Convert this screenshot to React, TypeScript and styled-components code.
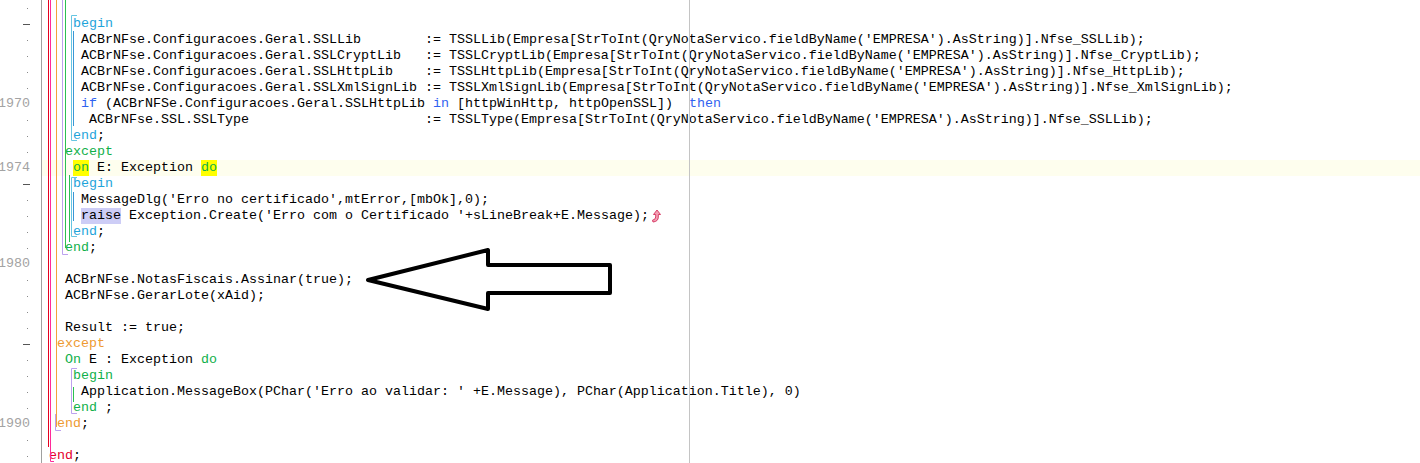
import React from 'react';
import styled, { createGlobalStyle } from 'styled-components';

const Global = createGlobalStyle`
  html, body { margin: 0; padding: 0; background: #ffffff; }
  body { width: 1420px; height: 463px; overflow: hidden; }
`;

type Kind = 'plain' | 'kw' | 'blk' | 'grn' | 'org' | 'red' | 'mark' | 'raise';
type Seg = [string, Kind?];
interface Line {
  n: number;
  segs: Seg[];
  fold?: boolean;
  current?: boolean;
  icon?: boolean;
}

const Q = "'EMPRESA'";
const tail = (fn: string) => `(Empresa[StrToInt(QryNotaServico.fieldByName(${Q}).AsString)].${fn});`;

const lines: Line[] = [
  { n: 1964, segs: [] },
  { n: 1965, segs: [['   '], ['begin', 'blk']], fold: true },
  { n: 1966, segs: [['    ACBrNFse.Configuracoes.Geral.SSLLib        := TSSLLib' + tail('Nfse_SSLLib')]] },
  { n: 1967, segs: [['    ACBrNFse.Configuracoes.Geral.SSLCryptLib   := TSSLCryptLib' + tail('Nfse_CryptLib')]] },
  { n: 1968, segs: [['    ACBrNFse.Configuracoes.Geral.SSLHttpLib    := TSSLHttpLib' + tail('Nfse_HttpLib')]] },
  { n: 1969, segs: [['    ACBrNFse.Configuracoes.Geral.SSLXmlSignLib := TSSLXmlSignLib' + tail('Nfse_XmlSignLib')]] },
  {
    n: 1970,
    segs: [
      ['    '],
      ['if', 'kw'],
      [' (ACBrNFSe.Configuracoes.Geral.SSLHttpLib '],
      ['in', 'kw'],
      [' [httpWinHttp, httpOpenSSL])  '],
      ['then', 'kw'],
    ],
  },
  { n: 1971, segs: [['     ACBrNFse.SSL.SSLType                      := TSSLType' + tail('Nfse_SSLLib')]] },
  { n: 1972, segs: [['   '], ['end', 'blk'], [';']] },
  { n: 1973, segs: [['  '], ['except', 'grn']] },
  { n: 1974, segs: [['   '], ['on', 'mark'], [' E: Exception '], ['do', 'mark']], current: true },
  { n: 1975, segs: [['   '], ['begin', 'blk']], fold: true },
  { n: 1976, segs: [["    MessageDlg('Erro no certificado',mtError,[mbOk],0);"]] },
  {
    n: 1977,
    segs: [['    '], ['raise', 'raise'], [" Exception.Create('Erro com o Certificado '+sLineBreak+E.Message);"]],
    icon: true,
  },
  { n: 1978, segs: [['   '], ['end', 'blk'], [';']] },
  { n: 1979, segs: [['  '], ['end', 'grn'], [';']] },
  { n: 1980, segs: [] },
  { n: 1981, segs: [['  ACBrNFse.NotasFiscais.Assinar(true);']] },
  { n: 1982, segs: [['  ACBrNFse.GerarLote(xAid);']] },
  { n: 1983, segs: [] },
  { n: 1984, segs: [['  Result := true;']] },
  { n: 1985, segs: [[' '], ['except', 'org']], fold: true },
  { n: 1986, segs: [['  '], ['On', 'grn'], [' E : Exception '], ['do', 'grn']] },
  { n: 1987, segs: [['   '], ['begin', 'grn']] },
  { n: 1988, segs: [["    Application.MessageBox(PChar('Erro ao validar: ' +E.Message), PChar(Application.Title), 0)"]] },
  { n: 1989, segs: [['   '], ['end', 'grn'], [' ;']] },
  { n: 1990, segs: [[' '], ['end', 'org'], [';']] },
  { n: 1991, segs: [] },
  { n: 1992, segs: [['end', 'red'], [';']] },
];

const kindColor: Record<Kind, string> = {
  plain: '#000000',
  kw: '#2f62f0',
  blk: '#1ea4da',
  grn: '#10b04a',
  org: '#ee9a30',
  red: '#e4002a',
  mark: '#10b04a',
  raise: '#000000',
};

const kindBg: Record<Kind, string> = {
  plain: 'transparent',
  kw: 'transparent',
  blk: 'transparent',
  grn: 'transparent',
  org: 'transparent',
  red: 'transparent',
  mark: '#ffff00',
  raise: '#cdcdf6',
};

const Page = styled.div`
  position: relative;
  width: 1420px;
  height: 463px;
  overflow: hidden;
  background: #ffffff;
`;

const Editor = styled.div`
  display: flex;
  flex-direction: column;
  margin-top: 0;
`;

const Row = styled.div`
  display: grid;
  grid-template-columns: 42px 1fr;
  height: 16px;
`;

const Gutter = styled.div`
  border-right: 1px solid #a0a0a0;
  display: flex;
  align-items: center;
  justify-content: flex-end;
  padding-right: 11px;
  font-family: 'Liberation Mono', 'Courier New', monospace;
  font-size: 13.33px;
  line-height: 16px;
  color: #a3a3a3;
`;

const Dot = styled.span`
  width: 1px;
  height: 1px;
  background: #8a8a8a;
  margin-right: 2px;
`;

const FoldMark = styled.span`
  width: 7px;
  height: 1px;
  background: #555555;
`;

const Code = styled.div<{ $current?: boolean }>`
  padding-left: 7px;
  white-space: pre;
  font-family: 'Liberation Mono', 'Courier New', monospace;
  font-size: 13.33px;
  line-height: 16px;
  color: #000000;
  background: ${(p) => (p.$current ? '#fefeee' : 'transparent')};
  display: flex;
  align-items: center;
`;

const Tok = styled.span<{ $kind: Kind }>`
  color: ${(p) => kindColor[p.$kind]};
  background: ${(p) => kindBg[p.$kind]};
`;

const Overlay = styled.svg`
  position: absolute;
  left: 0;
  top: 0;
  pointer-events: none;
`;

const JumpIcon = styled.svg`
  margin-left: 2px;
  flex: none;
`;

type Guide = { x: number; y1: number; y2: number; c: string; top?: number; bottom?: number };

const C = {
  red: '#e60020',
  mag: '#ff2a9a',
  org: '#f2a33a',
  lav: '#bda2ee',
  grn: '#2cc052',
  cyan: '#66c6e2',
  blue: '#3b98d6',
};

const guides: Guide[] = [
  { x: 48.5, y1: 0, y2: 447, c: C.red },
  { x: 50.5, y1: 0, y2: 461, c: C.mag, bottom: 54 },
  { x: 56.5, y1: 0, y2: 427, c: C.org },
  { x: 55.5, y1: 414, y2: 430, c: C.lav, bottom: 61 },
  { x: 62.5, y1: 0, y2: 254, c: C.lav, bottom: 68 },
  { x: 65.5, y1: 0, y2: 248, c: C.grn },
  { x: 69.5, y1: 175, y2: 242, c: C.grn },
  { x: 71.5, y1: 15, y2: 140, c: C.cyan, top: 77, bottom: 77 },
  { x: 73.5, y1: 31, y2: 126, c: C.blue },
  { x: 71.5, y1: 177, y2: 236, c: C.cyan, top: 77, bottom: 77 },
  { x: 73.5, y1: 192, y2: 221, c: C.blue },
  { x: 71.5, y1: 368, y2: 413, c: C.lav, top: 77, bottom: 77 },
  { x: 73.5, y1: 387, y2: 402, c: C.grn },
];

function Guides() {
  return (
    <Overlay width={1420} height={463} viewBox="0 0 1420 463">
      {guides.map((g, i) => {
        let d = '';
        if (g.top) d += `M${g.top} ${g.y1 + 0.5} H${g.x} `;
        else d += `M${g.x} ${g.y1} `;
        d += `V${g.y2 + (g.bottom ? 0.5 : 0)} `;
        if (g.bottom) d += `H${g.bottom}`;
        return <path key={i} d={d} fill="none" stroke={g.c} strokeWidth={1} />;
      })}
      <line x1={689.5} y1={0} x2={689.5} y2={463} stroke="#c4c4c4" strokeWidth={1} />
    </Overlay>
  );
}

function BigArrow() {
  return (
    <Overlay width={1420} height={463} viewBox="0 0 1420 463">
      <polygon
        points="368,280 488,250 488,265 610,265 610,293 488,293 488,309"
        fill="none"
        stroke="#000000"
        strokeWidth={4}
        strokeLinejoin="round"
      />
    </Overlay>
  );
}

function Jump() {
  return (
    <JumpIcon width={10} height={14} viewBox="0 0 10 14">
      <path
        d="M6 1 L9.5 5.5 H7.3 V8 Q7.3 12.5 2 13 L1.5 11.2 Q4.7 10.6 4.7 8 V5.5 H2.5 Z"
        fill="#f4a0b4"
        stroke="#d8406a"
        strokeWidth={1}
        strokeLinejoin="round"
      />
    </JumpIcon>
  );
}

export default function App() {
  return (
    <Page>
      <Global />
      <Editor>
        {lines.map((l) => {
          const showNum = l.n % 10 === 0 || l.n === 1974;
          return (
            <Row key={l.n}>
              <Gutter>{showNum ? l.n : l.fold ? <FoldMark /> : <Dot />}</Gutter>
              <Code $current={l.current}>
                {l.segs.map((s, i) => (
                  <Tok key={i} $kind={s[1] ?? 'plain'}>
                    {s[0]}
                  </Tok>
                ))}
                {l.icon && <Jump />}
              </Code>
            </Row>
          );
        })}
      </Editor>
      <Guides />
      <BigArrow />
    </Page>
  );
}
